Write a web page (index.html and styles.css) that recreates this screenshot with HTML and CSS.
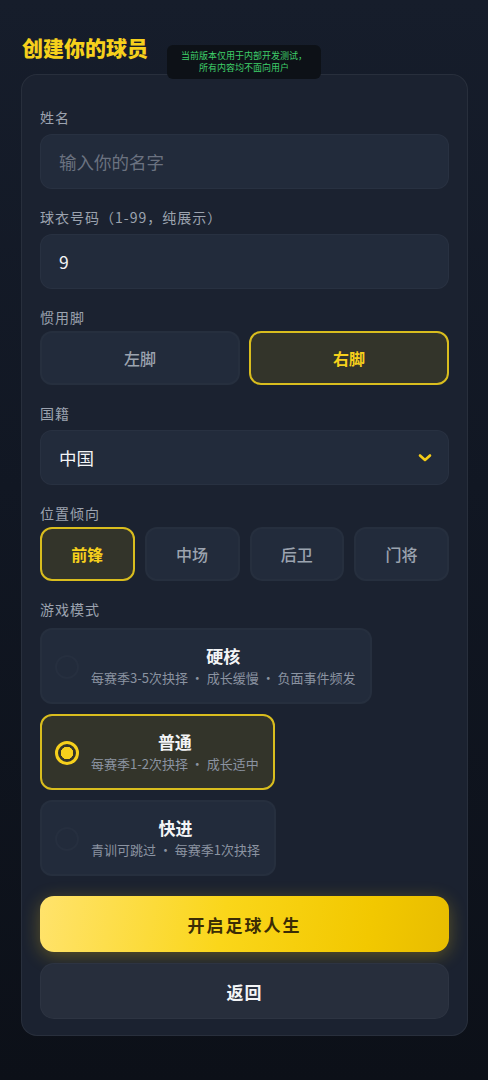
FILE: index.html
```html
<!DOCTYPE html>
<html lang="zh-CN">
<head>
  <meta charset="UTF-8">
  <meta name="viewport" content="width=device-width, initial-scale=1.0">
  <title>创建你的球员</title>
  <link rel="stylesheet" href="styles.css">
</head>
<body>
  <div class="dev-tip">当前版本仅用于内部开发测试，<br>所有内容均不面向用户</div>

  <div class="page">
    <h1 class="page-title">创建你的球员</h1>

    <div class="panel">
      <div class="field">
        <div class="field-label">姓名</div>
        <div class="input placeholder">输入你的名字</div>
      </div>

      <div class="field">
        <div class="field-label">球衣号码（1-99，纯展示）</div>
        <div class="input">9</div>
      </div>

      <div class="field">
        <div class="field-label">惯用脚</div>
        <div class="choices two">
          <div class="choice">左脚</div>
          <div class="choice active">右脚</div>
        </div>
      </div>

      <div class="field">
        <div class="field-label">国籍</div>
        <div class="input select">
          <span>中国</span>
          <svg class="chevron" width="14" height="10" viewBox="0 0 14 10">
            <path d="M2 2.5 L7 7 L12 2.5" fill="none" stroke="#f5cc18" stroke-width="2.6" stroke-linecap="round" stroke-linejoin="round"/>
          </svg>
        </div>
      </div>

      <div class="field">
        <div class="field-label">位置倾向</div>
        <div class="choices four">
          <div class="choice active">前锋</div>
          <div class="choice">中场</div>
          <div class="choice">后卫</div>
          <div class="choice">门将</div>
        </div>
      </div>

      <div class="field">
        <div class="field-label">游戏模式</div>
        <div class="modes">
          <div class="mode">
            <span class="radio"></span>
            <div class="mode-text">
              <div class="mode-name">硬核</div>
              <div class="mode-desc">每赛季3-5次抉择 · 成长缓慢 · 负面事件频发</div>
            </div>
          </div>
          <div class="mode active">
            <span class="radio"></span>
            <div class="mode-text">
              <div class="mode-name">普通</div>
              <div class="mode-desc">每赛季1-2次抉择 · 成长适中</div>
            </div>
          </div>
          <div class="mode">
            <span class="radio"></span>
            <div class="mode-text">
              <div class="mode-name">快进</div>
              <div class="mode-desc">青训可跳过 · 每赛季1次抉择</div>
            </div>
          </div>
        </div>
      </div>

      <div class="actions">
        <button class="btn btn-primary">开启足球人生</button>
        <button class="btn btn-back">返回</button>
      </div>
    </div>
  </div>
</body>
</html>
```

FILE: styles.css
```css
html, body {
  margin: 0;
  padding: 0;
}

body {
  min-height: 1080px;
  background: linear-gradient(180deg, #161d2b 0%, #111723 45%, #0c1018 100%);
  font-family: "Noto Sans CJK SC", "Noto Sans", sans-serif;
  color: #e5e7eb;
}

.page {
  padding: 32px 20px 40px 21px;
}

.page-title {
  margin: 0 0 12px 1px;
  font-size: 21px;
  line-height: 30px;
  font-weight: 900;
  color: #f6d01c;
}

/* 顶部测试提示 */
.dev-tip {
  position: absolute;
  top: 45px;
  left: 167px;
  width: 154px;
  height: 34px;
  box-sizing: border-box;
  padding: 5px 0;
  background: #0d1117;
  border-radius: 6px;
  color: #3fcf6a;
  font-size: 9px;
  line-height: 12px;
  text-align: center;
  z-index: 2;
}

.panel {
  background: #1b2230;
  border: 1px solid rgba(255, 255, 255, .06);
  border-radius: 16px;
  padding: 32px 18px 16px;
}

.field {
  margin-bottom: 18px;
}

.field-label {
  font-size: 14px;
  line-height: 20px;
  letter-spacing: 1px;
  color: #9ca3af;
  margin-bottom: 7px;
}

.input {
  height: 55px;
  box-sizing: border-box;
  display: flex;
  align-items: center;
  padding: 0 18px;
  background: #222b3b;
  border: 1px solid rgba(255, 255, 255, .03);
  border-radius: 12px;
  font-size: 17.5px;
  color: #f3f4f6;
}

.input.placeholder {
  color: #6b7280;
}

.input.select {
  justify-content: space-between;
  padding-right: 16px;
}

.chevron {
  display: block;
}

.choices {
  display: grid;
  gap: 9px;
  margin-top: -3px;
}
.choices.two {
  grid-template-columns: 1fr 1fr;
}
.choices.four {
  grid-template-columns: repeat(4, 1fr);
  gap: 10px;
}

.choice {
  height: 54px;
  box-sizing: border-box;
  display: flex;
  align-items: center;
  justify-content: center;
  background: #222b3b;
  border: 2px solid rgba(255, 255, 255, .02);
  border-radius: 12px;
  font-size: 16px;
  font-weight: 500;
  color: #9ca3af;
}

.choice.active {
  background: #33342a;
  border-color: #d9bd1e;
  color: #f6d01c;
  font-weight: 700;
}

.modes {
  display: flex;
  flex-direction: column;
  align-items: flex-start;
  gap: 10px;
  padding-top: 2px;
}

.mode {
  display: flex;
  align-items: center;
  gap: 12px;
  height: 76px;
  box-sizing: border-box;
  padding: 0 14px 0 13px;
  background: #222b3b;
  border: 2px solid rgba(255, 255, 255, .02);
  border-radius: 12px;
}

.mode.active {
  background: #33342a;
  border-color: #d9bd1e;
}

.radio {
  width: 24px;
  height: 24px;
  box-sizing: border-box;
  border: 2px solid #262f3f;
  border-radius: 50%;
  flex: none;
  margin-top: 2px;
}

.mode.active .radio {
  border: 3px solid #f6d01c;
  background: radial-gradient(circle, #f6d01c 0 6px, transparent 6.5px);
}

.mode-text {
  text-align: center;
}

.mode-name {
  font-size: 17px;
  line-height: 24px;
  font-weight: 700;
  color: #f3f4f6;
}

.mode-desc {
  font-size: 13px;
  line-height: 20px;
  color: #8b93a1;
}

.actions {
  display: flex;
  flex-direction: column;
  gap: 11px;
  padding-top: 2px;
}

.btn {
  height: 56px;
  border: none;
  border-radius: 14px;
  font-family: inherit;
  font-size: 17px;
  font-weight: 700;
  letter-spacing: 1px;
}

.btn-primary {
  background: linear-gradient(100deg, #ffe36c 0%, #fad61a 45%, #f2c800 80%, #e8bd00 100%);
  color: #3b2c05;
  letter-spacing: 2px;
  box-shadow: 0 4px 18px rgba(245, 200, 20, .3);
}

.btn-back {
  background: #272e3c;
  border: 1px solid rgba(255, 255, 255, .03);
  color: #f3f4f6;
}
```
